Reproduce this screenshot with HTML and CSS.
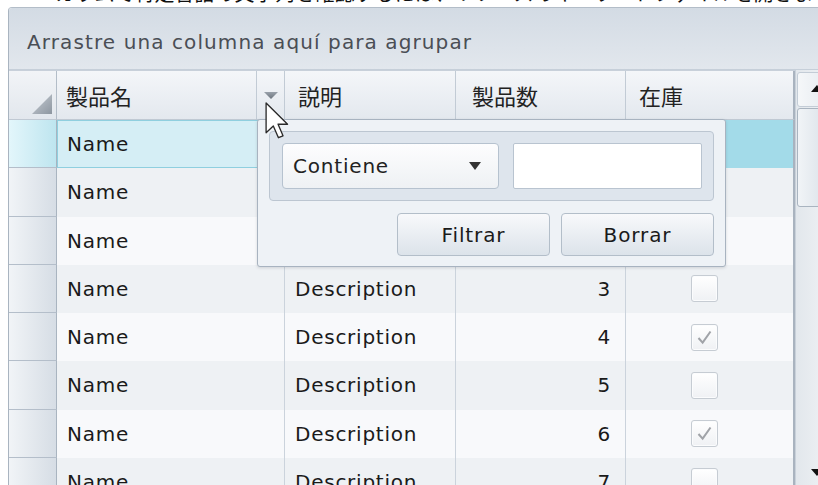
FILE: index.html
```html
<!DOCTYPE html>
<html lang="ja">
<head>
<meta charset="utf-8">
<title>製品一覧</title>
<link rel="stylesheet" href="styles.css">
</head>
<body>
<p class="caption">カラムで特定言語の文字列を確認するには、リソースのキーワードファイルを開きます。</p>

<div class="grid">
  <div class="group-panel">Arrastre una columna aquí para agrupar</div>

  <div class="grid-body">
    <div class="table">
      <div class="row header">
        <div class="cell indicator">
          <svg class="corner" width="20" height="20" viewBox="0 0 20 20">
            <defs>
              <linearGradient id="cornerFill" x1="0" y1="0" x2="1" y2="1">
                <stop offset="0" stop-color="#c9cfd6"/>
                <stop offset="1" stop-color="#8d96a0"/>
              </linearGradient>
            </defs>
            <polygon points="20,0 20,20 0,20" fill="url(#cornerFill)"/>
          </svg>
        </div>
        <div class="cell hcell hname">
          <span class="htext">製品名</span>
          <span class="filter-btn">
            <svg width="14" height="7" viewBox="0 0 14 7">
              <defs>
                <linearGradient id="filterFill" x1="0" y1="0" x2="0" y2="1">
                  <stop offset="0" stop-color="#9aa2ab"/>
                  <stop offset="1" stop-color="#6c747d"/>
                </linearGradient>
              </defs>
              <polygon points="0,0 14,0 7,7" fill="url(#filterFill)"/>
            </svg>
          </span>
        </div>
        <div class="cell hcell"><span class="htext">説明</span></div>
        <div class="cell hcell hqty"><span class="htext">製品数</span></div>
        <div class="cell hcell hstock last"><span class="htext">在庫</span></div>
      </div>

      <div class="row selected">
        <div class="cell indicator"></div>
        <div class="cell current">Name</div>
        <div class="cell">Description</div>
        <div class="cell num">0</div>
        <div class="cell check last"><span class="box on"><svg viewBox="0 0 27 27"><path d="M7 14 L11.5 19 L20 7"/></svg></span></div>
      </div>
      <div class="row alt">
        <div class="cell indicator"></div>
        <div class="cell">Name</div>
        <div class="cell">Description</div>
        <div class="cell num">1</div>
        <div class="cell check last"><span class="box"></span></div>
      </div>
      <div class="row">
        <div class="cell indicator"></div>
        <div class="cell">Name</div>
        <div class="cell">Description</div>
        <div class="cell num">2</div>
        <div class="cell check last"><span class="box on"><svg viewBox="0 0 27 27"><path d="M7 14 L11.5 19 L20 7"/></svg></span></div>
      </div>
      <div class="row alt">
        <div class="cell indicator"></div>
        <div class="cell">Name</div>
        <div class="cell">Description</div>
        <div class="cell num">3</div>
        <div class="cell check last"><span class="box"></span></div>
      </div>
      <div class="row">
        <div class="cell indicator"></div>
        <div class="cell">Name</div>
        <div class="cell">Description</div>
        <div class="cell num">4</div>
        <div class="cell check last"><span class="box on"><svg viewBox="0 0 27 27"><path d="M7 14 L11.5 19 L20 7"/></svg></span></div>
      </div>
      <div class="row alt">
        <div class="cell indicator"></div>
        <div class="cell">Name</div>
        <div class="cell">Description</div>
        <div class="cell num">5</div>
        <div class="cell check last"><span class="box"></span></div>
      </div>
      <div class="row">
        <div class="cell indicator"></div>
        <div class="cell">Name</div>
        <div class="cell">Description</div>
        <div class="cell num">6</div>
        <div class="cell check last"><span class="box on"><svg viewBox="0 0 27 27"><path d="M7 14 L11.5 19 L20 7"/></svg></span></div>
      </div>
      <div class="row alt">
        <div class="cell indicator"></div>
        <div class="cell">Name</div>
        <div class="cell">Description</div>
        <div class="cell num">7</div>
        <div class="cell check last"><span class="box"></span></div>
      </div>
    </div>

    <div class="scrollbar">
      <div class="sb-btn sb-up"><span class="arrow-up"></span></div>
      <div class="sb-thumb"></div>
      <div class="sb-track"></div>
      <div class="sb-btn sb-down"><span class="arrow-down"></span></div>
    </div>
  </div>

  <div class="filter-popup">
    <div class="filter-fields">
      <div class="combo">
        <span>Contiene</span>
        <span class="combo-arrow"></span>
      </div>
      <div class="text-input"></div>
    </div>
    <div class="filter-actions">
      <button class="btn">Filtrar</button>
      <button class="btn">Borrar</button>
    </div>
  </div>

  <svg class="cursor" width="25" height="38" viewBox="0 0 13 20">
    <path d="M0.5 0.5 L0.5 16.2 L4.3 12.6 L7 18.8 L9.4 17.8 L6.8 11.7 L11.8 11.7 Z" fill="#fff" stroke="#2a2a2a" stroke-width="0.7" stroke-linejoin="round"/>
  </svg>
</div>
</body>
</html>
```

FILE: styles.css
```css
* {
  box-sizing: border-box;
}

html,
body {
  margin: 0;
  width: 818px;
  height: 485px;
  overflow: hidden;
  background: #ffffff;
}

body {
  font-family: "DejaVu Sans", Verdana, sans-serif;
  color: #1a1a1a;
}

/* heading line cut by the top of the window */
.caption {
  margin: -17px 0 0 55px;
  height: 24px;
  font: 20px/19px "Noto Sans CJK JP", sans-serif;
  white-space: nowrap;
  color: #111;
}

/* grid frame */
.grid {
  position: relative;
  margin-left: 8px;
  width: 820px;
  height: 481px;
  border-left: 1px solid #a9b4c0;
  border-top: 1px solid #b3bdc8;
  border-top-left-radius: 4px;
  overflow: hidden;
  display: flex;
  flex-direction: column;
}

.group-panel {
  flex: none;
  height: 62px;
  padding: 6px 0 0 18px;
  display: flex;
  align-items: center;
  font-size: 20px;
  letter-spacing: 1.1px;
  color: #4a4e55;
  background: linear-gradient(#d3dbe4, #e2e7ed);
  border-bottom: 1px solid #c6cfd9;
}

.grid-body {
  flex: 1;
  min-height: 0;
  display: flex;
}

.table {
  width: 786px;
  flex: none;
  overflow: hidden;
}

.row {
  display: grid;
  grid-template-columns: 48px 228px 171px 170px 169px;
  height: 48.25px;
  background: #f8f9fb;
}

.row.alt {
  background: #eef1f4;
}

.cell {
  display: flex;
  align-items: center;
  padding: 0 10px;
  font-size: 20px;
  letter-spacing: 0.75px;
  color: #1a1a1a;
  border-right: 1px solid #cbd3dc;
  white-space: nowrap;
  overflow: hidden;
}

.cell.last {
  border-right: 2px solid #a9b3bf;
}

.cell.num {
  justify-content: flex-end;
  padding-right: 14px;
}

.cell.check {
  justify-content: center;
  padding: 0 10px 0 0;
}

.indicator {
  padding: 0;
  background: linear-gradient(90deg, #f1f4f7, #d6dde5);
  border-right: 1px solid #a9b4c0;
  border-bottom: 1px solid #b4beca;
}

/* header */
.row.header {
  height: 50px;
  border-top: 1px solid #c8d0da;
  background: linear-gradient(#f4f6f9, #e3e8ee);
}

.row.header .cell {
  border-bottom: 1px solid #c0c9d3;
  border-right-color: #c2cbd5;
}

.row.header .cell.last {
  border-right: 2px solid #a9b3bf;
}

.row.header .indicator {
  justify-content: flex-end;
  align-items: flex-end;
  padding: 0 4px 5px 0;
  background: linear-gradient(#f2f4f7, #e2e7ed);
  border-right: 1px solid #b3bdc8;
}

.hcell {
  padding-left: 13px;
  font-family: "Noto Sans CJK JP", sans-serif;
  font-size: 22px;
  letter-spacing: 0;
  color: #222;
}

.hname {
  padding: 0 0 0 9px;
  justify-content: space-between;
}

.hqty {
  padding-left: 16px;
}

.hstock {
  padding-left: 13px;
}

.filter-btn {
  align-self: stretch;
  width: 28px;
  display: flex;
  align-items: center;
  justify-content: center;
  border-left: 1px solid #c2cbd5;
}

/* selected row */
.row.selected {
  background: #a3dbe9;
}

.row.selected .indicator {
  background: linear-gradient(90deg, #e3f6fb, #bee5ef);
}

.row.selected .current {
  background: #d5eef5;
  box-shadow: inset 0 0 0 1px #8fcfdf;
}

/* check boxes */
.box {
  width: 27px;
  height: 27px;
  border: 1px solid #c6ccd3;
  border-radius: 3px;
  background: linear-gradient(#ffffff, #eff1f4);
  box-shadow: inset 0 0 0 1px #fbfcfd;
  display: block;
}

.box svg {
  display: block;
  width: 25px;
  height: 25px;
  fill: none;
  stroke: #a0a3a8;
  stroke-width: 2.2;
}

/* vertical scroll bar */
.scrollbar {
  width: 33px;
  flex: none;
  display: flex;
  flex-direction: column;
  padding: 2px 0 0 1px;
  border-left: 1px solid #c9d1da;
  background: linear-gradient(90deg, #e2e7ec, #eef1f4);
}

.sb-btn {
  flex: none;
  height: 35px;
  display: flex;
  justify-content: center;
  align-items: center;
}

.sb-up {
  border: 1px solid #c3ccd6;
  border-radius: 3px;
  background: linear-gradient(90deg, #f5f7f9, #e6ebf0);
  padding-left: 9px;
}

.arrow-up {
  width: 0;
  height: 0;
  border-left: 6px solid transparent;
  border-right: 6px solid transparent;
  border-bottom: 7px solid #111;
  margin-top: -2px;
}

.sb-thumb {
  flex: none;
  height: 99px;
  margin-top: 1px;
  border: 1px solid #a9b4c0;
  border-radius: 3px;
  background: linear-gradient(90deg, #f1f4f7, #dbe2e9);
}

.sb-track {
  flex: 1;
}

.sb-down {
  height: 32px;
  padding-left: 9px;
}

.arrow-down {
  width: 0;
  height: 0;
  border-left: 6px solid transparent;
  border-right: 6px solid transparent;
  border-top: 7px solid #111;
}

/* filter drop-down */
.filter-popup {
  position: absolute;
  left: 248px;
  top: 111px;
  width: 469px;
  height: 148px;
  padding: 11px 11px 10px;
  display: flex;
  flex-direction: column;
  gap: 12px;
  background: #eef2f6;
  border: 1px solid #a8b3c0;
  border-radius: 3px;
  box-shadow: 0 1px 3px rgba(60, 70, 80, 0.18);
  z-index: 2;
}

.filter-fields {
  height: 70px;
  display: flex;
  gap: 14px;
  padding: 11px 11px 11px 12px;
  background: #dee5ed;
  border: 1px solid #bcc6d1;
  border-radius: 4px;
}

.combo {
  width: 217px;
  display: flex;
  align-items: center;
  justify-content: space-between;
  padding: 0 17px 0 10px;
  font-size: 20px;
  letter-spacing: 0.8px;
  color: #222;
  background: linear-gradient(#fdfdfe, #eef1f4);
  border: 1px solid #b6c2cf;
  border-radius: 4px;
}

.combo-arrow {
  width: 0;
  height: 0;
  border-left: 6px solid transparent;
  border-right: 6px solid transparent;
  border-top: 8px solid #333;
}

.text-input {
  flex: 1;
  background: #ffffff;
  border: 1px solid #b9c4d0;
  border-radius: 2px;
}

.filter-actions {
  display: flex;
  justify-content: flex-end;
  gap: 11px;
}

.btn {
  width: 153px;
  height: 43px;
  font-family: "DejaVu Sans", Verdana, sans-serif;
  font-size: 20px;
  letter-spacing: 0.9px;
  color: #1a1a1a;
  background: linear-gradient(#f8f9fb, #dce3ea);
  border: 1px solid #b3bec9;
  border-radius: 4px;
  padding: 0;
}

/* mouse pointer resting on the filter button */
.cursor {
  position: absolute;
  left: 256px;
  top: 94px;
  z-index: 3;
}
```
